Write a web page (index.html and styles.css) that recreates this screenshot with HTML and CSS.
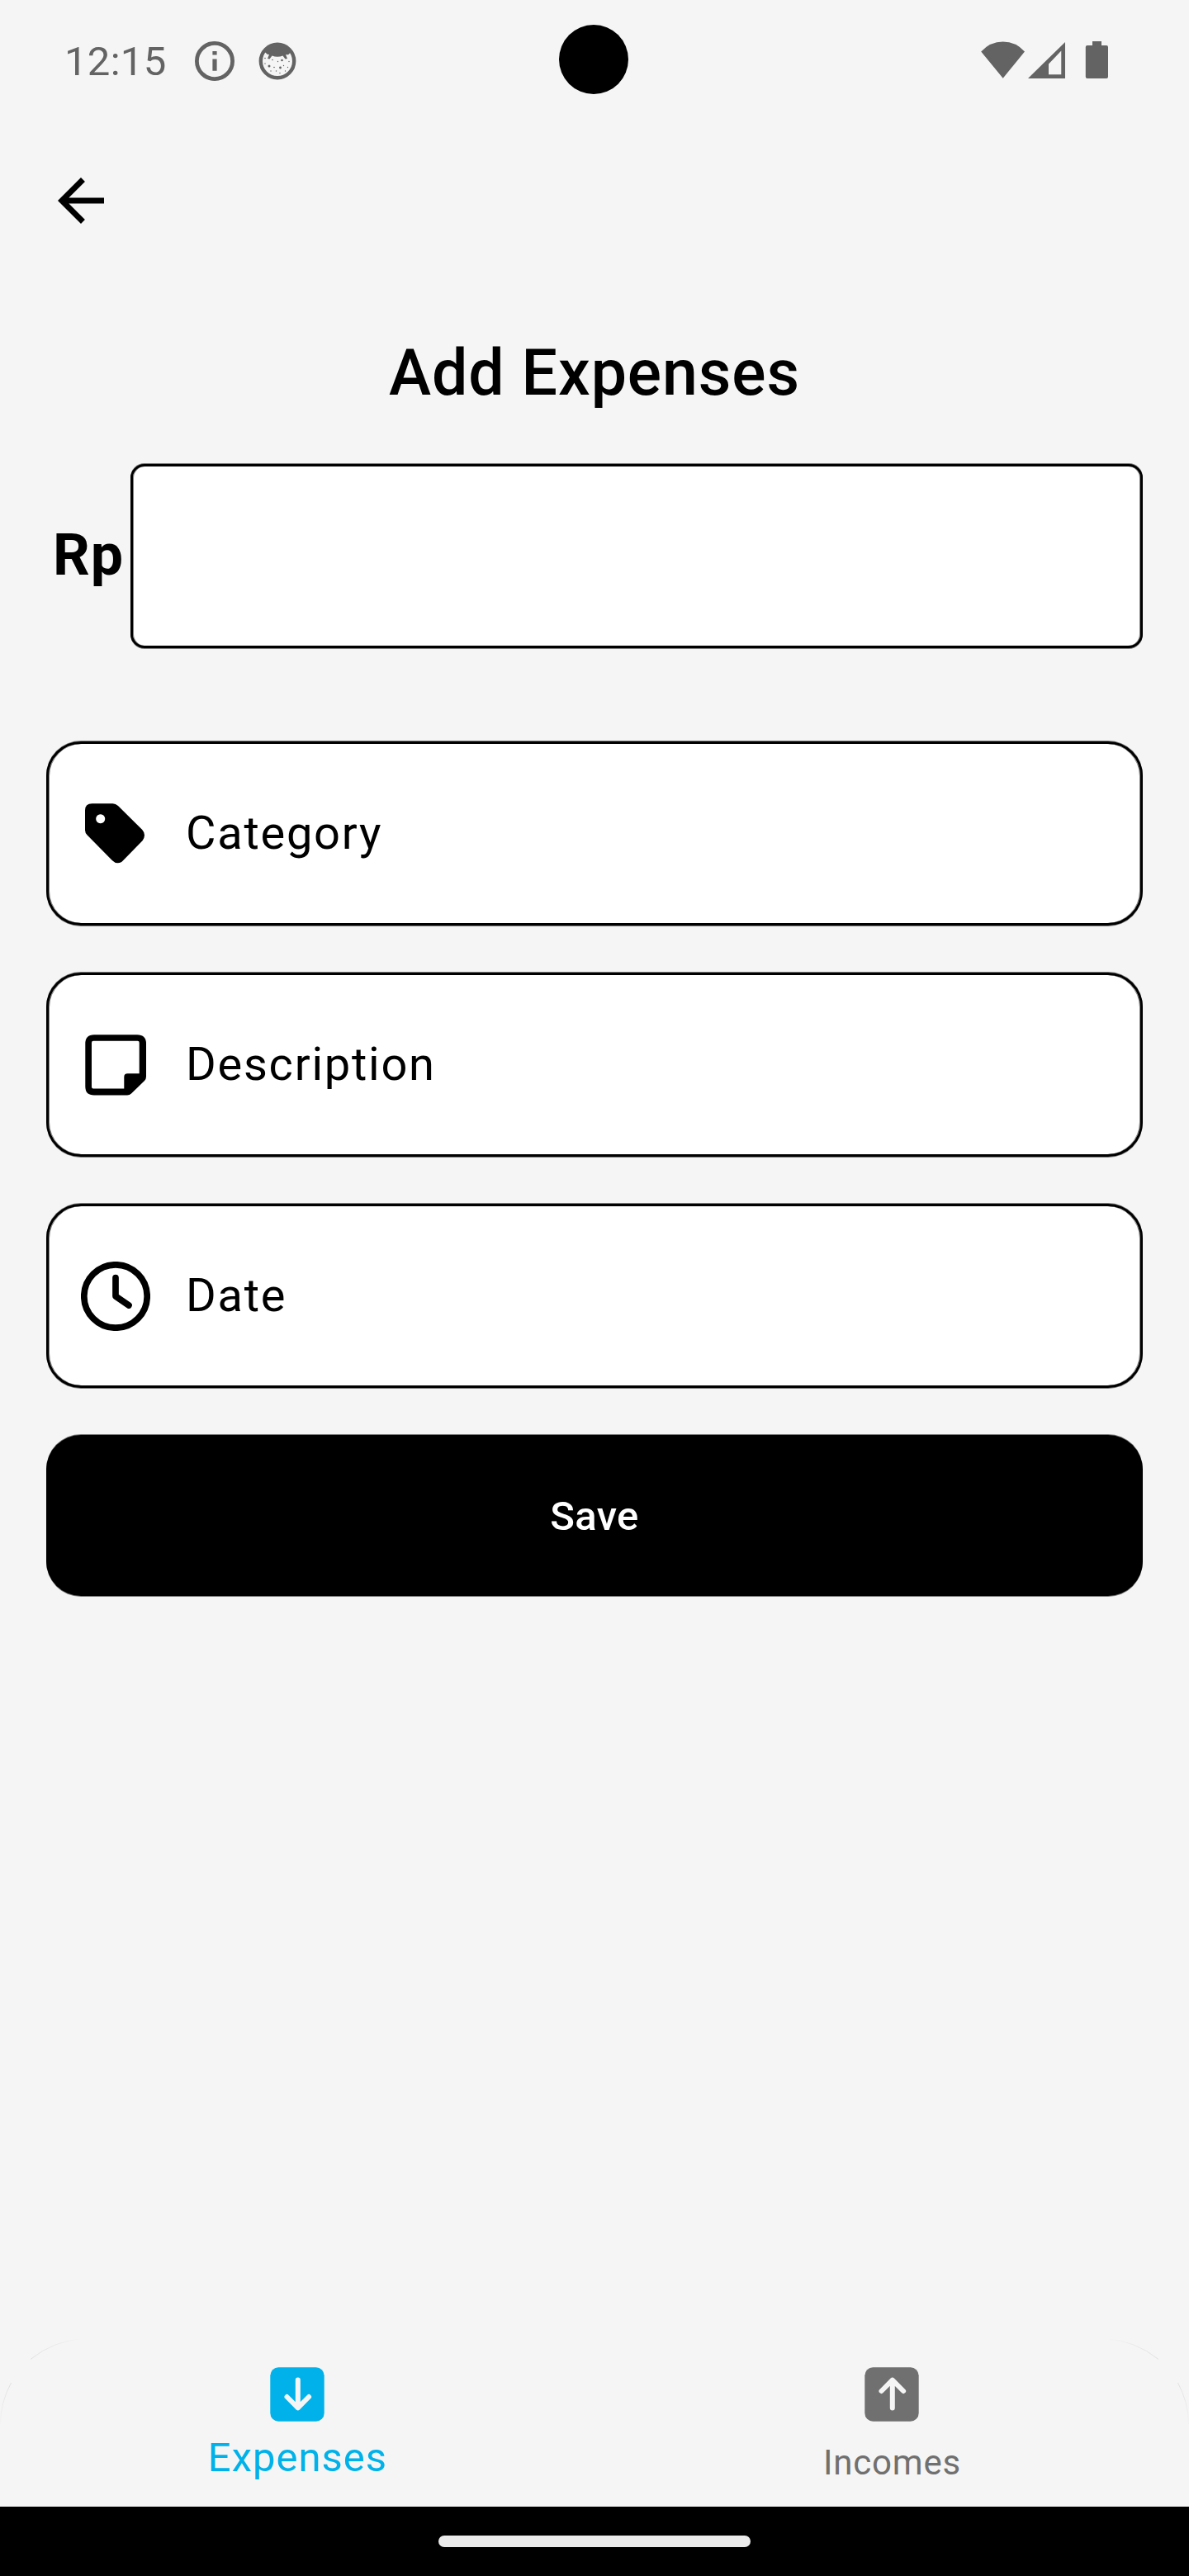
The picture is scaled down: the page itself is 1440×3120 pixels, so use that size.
FILE: index.html
```html
<!DOCTYPE html>
<html lang="en">
<head>
<meta charset="utf-8">
<title>Add Expenses</title>
<link rel="stylesheet" href="styles.css">
</head>
<body>
<div class="screen">
  <header class="status">
    <span class="time">12:15</span>
    <svg class="info" width="48" height="48" viewBox="0 0 48 48"><circle cx="24" cy="24" r="21.6" fill="none" stroke="#636363" stroke-width="4.8"/><path d="M21.4 12h5.2v4.4h-5.2zM21.4 21.4h5.2v14.4h-5.2z" fill="#636363"/></svg>
    <svg class="face" width="46" height="46" viewBox="0 0 46 46" fill="#636363"><circle cx="23" cy="23" r="20.2" fill="none" stroke="#636363" stroke-width="4.4"/><path d="M6 11Q13 1.500 23 1.500T40 11L36.500 15Q35 15.500 33 15L35 20L32.500 20.500L29.500 16.500Q23 19 16.500 16.500L13.500 20.500L11 20L13 15Q10 15.500 9 13Z"/><circle cx="13" cy="29" r="1.500"/><circle cx="26.500" cy="31" r="1.400"/><circle cx="28.500" cy="22" r="1.300"/><circle cx="17" cy="21.500" r=".8"/><circle cx="8" cy="19.500" r=".8"/><circle cx="8" cy="26" r=".7"/><circle cx="19" cy="30.500" r=".8"/><circle cx="23.500" cy="23.500" r=".7"/><circle cx="30.500" cy="28.500" r=".7"/><circle cx="37" cy="23.500" r=".7"/><circle cx="35.500" cy="30.500" r=".7"/><circle cx="15" cy="35" r=".7"/><circle cx="21.500" cy="35" r=".7"/><circle cx="26" cy="37.500" r=".7"/><circle cx="32.500" cy="35" r=".7"/></svg>
    <span class="camera"></span>
    <svg class="signals" width="154" height="46" viewBox="0 0 154 46" fill="#636363"><path d="M.2 12.500Q11 .4 26.700 .4T53 12.500L26.700 44.700Z"/><path fill-rule="evenodd" d="M102 1V45H57ZM97.300 11.500L82 27.500V40.200H97.300Z"/><path d="M135 0h11v5h6q2 0 2 2v36q0 2-2 2h-23.200q-2 0-2-2v-36q0-2 2-2h6.200z"/></svg>
  </header>
  <nav class="toolbar">
    <svg width="84" height="84" viewBox="0 0 24 24"><path d="M20 11H7.830l5.590-5.590L12 4l-8 8 8 8 1.410-1.410L7.830 13H20z"/></svg>
  </nav>
  <main class="form">
    <h1 class="title">Add Expenses</h1>
    <div class="amount">
      <span class="currency">Rp</span>
      <div class="box amount-box"></div>
    </div>
    <div class="box field">
      <svg width="84" height="84" viewBox="0 0 84 84"><path fill-rule="evenodd" d="M13.500 5.300H38.500Q42 5.300 45 8L74.300 37Q77 40 77 43.600T74.300 50.400L51.300 74Q48.500 77.300 44.700 77.300T38 74.300L7.700 43.500Q5 41 5 37.500V13.500Q5 5.300 13.500 5.300ZM23.700 18.300a5.500 5.500 0 1 0 .01 0Z"/></svg>
      <span>Category</span>
    </div>
    <div class="box field">
      <svg width="84" height="84" viewBox="0 0 84 84"><path fill-rule="evenodd" d="M16 5.200H68Q79 5.200 79 16V56Q79 59 77 61L61 76.500Q59 78.500 56 78.500H16Q5.300 78.500 5.300 68V16Q5.300 5.200 16 5.200ZM15 12.800Q13 12.800 13 15V68.500Q13 70.500 15 70.500H52.300V56.500Q52.300 52.300 56.500 52.300H70.700V15Q70.700 12.800 68.700 12.800Z"/></svg>
      <span>Description</span>
    </div>
    <div class="box field">
      <svg width="84" height="84" viewBox="0 0 84 84" fill="none" stroke="#000" stroke-width="7.700" stroke-linecap="round" stroke-linejoin="round"><circle cx="42" cy="42" r="38.200"/><path d="M42 19.500V42L58 53"/></svg>
      <span>Date</span>
    </div>
    <button class="save">Save</button>
  </main>
  <nav class="tabs">
    <svg class="edge" width="1440" height="106" viewBox="0 0 1440 106" fill="none">
      <defs>
        <linearGradient id="top" gradientUnits="userSpaceOnUse" x1="37" y1="0" x2="100" y2="0"><stop offset="0" stop-color="#e0e0e0"/><stop offset="1" stop-color="#f5f5f5"/></linearGradient>
        <linearGradient id="side" gradientUnits="userSpaceOnUse" x1="0" y1="54" x2="0" y2="110"><stop offset="0" stop-color="#e0e0e0"/><stop offset="1" stop-color="#f5f5f5"/></linearGradient>
        <g id="corner"><path stroke="url(#top)" d="M100 .8Q65 3 37 25.500"/><path stroke="url(#side)" d="M13.500 54Q.5 78 .5 104"/></g>
      </defs>
      <use href="#corner"/>
      <use href="#corner" transform="translate(1440 0) scale(-1 1)"/>
    </svg>
    <div class="tab active">
      <svg width="66" height="66" viewBox="0 0 66 66"><rect x=".3" y=".3" width="65.400" height="65.400" rx="10" fill="#00b2e9"/><path d="M33.800 15.500V49.300M20.500 36L33.800 49.300L47.100 36" fill="none" stroke="#f5f5f5" stroke-width="6" stroke-linecap="round" stroke-linejoin="round"/></svg>
      <span>Expenses</span>
    </div>
    <div class="tab">
      <svg width="66" height="66" viewBox="0 0 66 66"><rect x=".3" y=".3" width="65.400" height="65.400" rx="10" fill="#707070"/><path d="M33.800 49.500V15.700M20.500 29L33.800 15.700L47.100 29" fill="none" stroke="#f5f5f5" stroke-width="6" stroke-linecap="round" stroke-linejoin="round"/></svg>
      <span>Incomes</span>
    </div>
  </nav>
  <footer class="system"><span class="handle"></span></footer>
</div>
</body>
</html>
```
FILE: styles.css
```css
* { box-sizing: border-box; }
body { margin: 0; background: #f5f5f5; color: #000; font-family: Roboto, sans-serif; }
svg { display: block; flex: none; }
.screen { width: 1440px; height: 3120px; display: flex; flex-direction: column; }

.status { position: relative; height: 144px; padding: 50px 98px 0 78px; display: flex; align-items: flex-start; color: #636363; }
.time { width: 158px; font-size: 49px; line-height: 58px; margin-top: -4px; letter-spacing: 0.3px; }
.face { margin-left: 29px; margin-top: 1px; }
.signals { margin-left: auto; }
.camera { position: absolute; left: 677px; top: 30px; width: 84px; height: 84px; border-radius: 50%; background: #000; }

.toolbar { height: 254px; padding: 57px 56px 0; }

.form { padding: 0 56px; flex: 1; display: flex; flex-direction: column; }
.title { margin: 0; height: 164px; padding-top: 8px; text-align: center; font-size: 77px; line-height: 92px; font-weight: 500; letter-spacing: 0.9px; }
.amount { display: flex; align-items: center; margin-bottom: 113px; }
.currency { width: 102px; padding: 0 0 3px 8px; font-size: 70px; font-weight: 700; letter-spacing: 0.8px; }
.box { height: 223px; background: #fff; border: 3px solid #000; border-radius: 42px; box-shadow: 0 -1px rgba(0,0,0,.5), 0 1px rgba(0,0,0,.5), inset 1px 0 rgba(0,0,0,.5), inset -1px 0 rgba(0,0,0,.5); }
.amount-box { flex: 1; border-radius: 17px; }
.field { display: flex; align-items: center; gap: 43px; padding-left: 39px; margin-bottom: 57px; font-size: 56px; letter-spacing: 1.75px; }
.field span { padding-bottom: 2px; }
.save { height: 195px; padding: 2px 0 0; border: 0; border-radius: 42px; background: #000; color: #fff; font-family: inherit; font-size: 49px; font-weight: 500; letter-spacing: 0.35px; box-shadow: 0 -1px rgba(0,0,0,.5), 0 1px rgba(0,0,0,.5); }

.tabs { position: relative; height: 204px; padding-top: 35px; display: flex; }
.edge { position: absolute; left: 0; top: 0; }
.tab { flex: 1; display: flex; flex-direction: column; align-items: center; color: #707070; font-size: 42px; line-height: 50px; letter-spacing: 0.8px; }
.tab span { margin-top: 25px; padding-left: 1px; }
.tab.active { color: #00b2e9; }
.tab.active span { font-size: 49px; line-height: 58px; margin-top: 15px; letter-spacing: 1px; }

.system { height: 84px; background: #000; padding-top: 35px; }
.handle { display: block; width: 378px; height: 14px; margin: 0 auto; border-radius: 7px; background: #ebebeb; }
```
